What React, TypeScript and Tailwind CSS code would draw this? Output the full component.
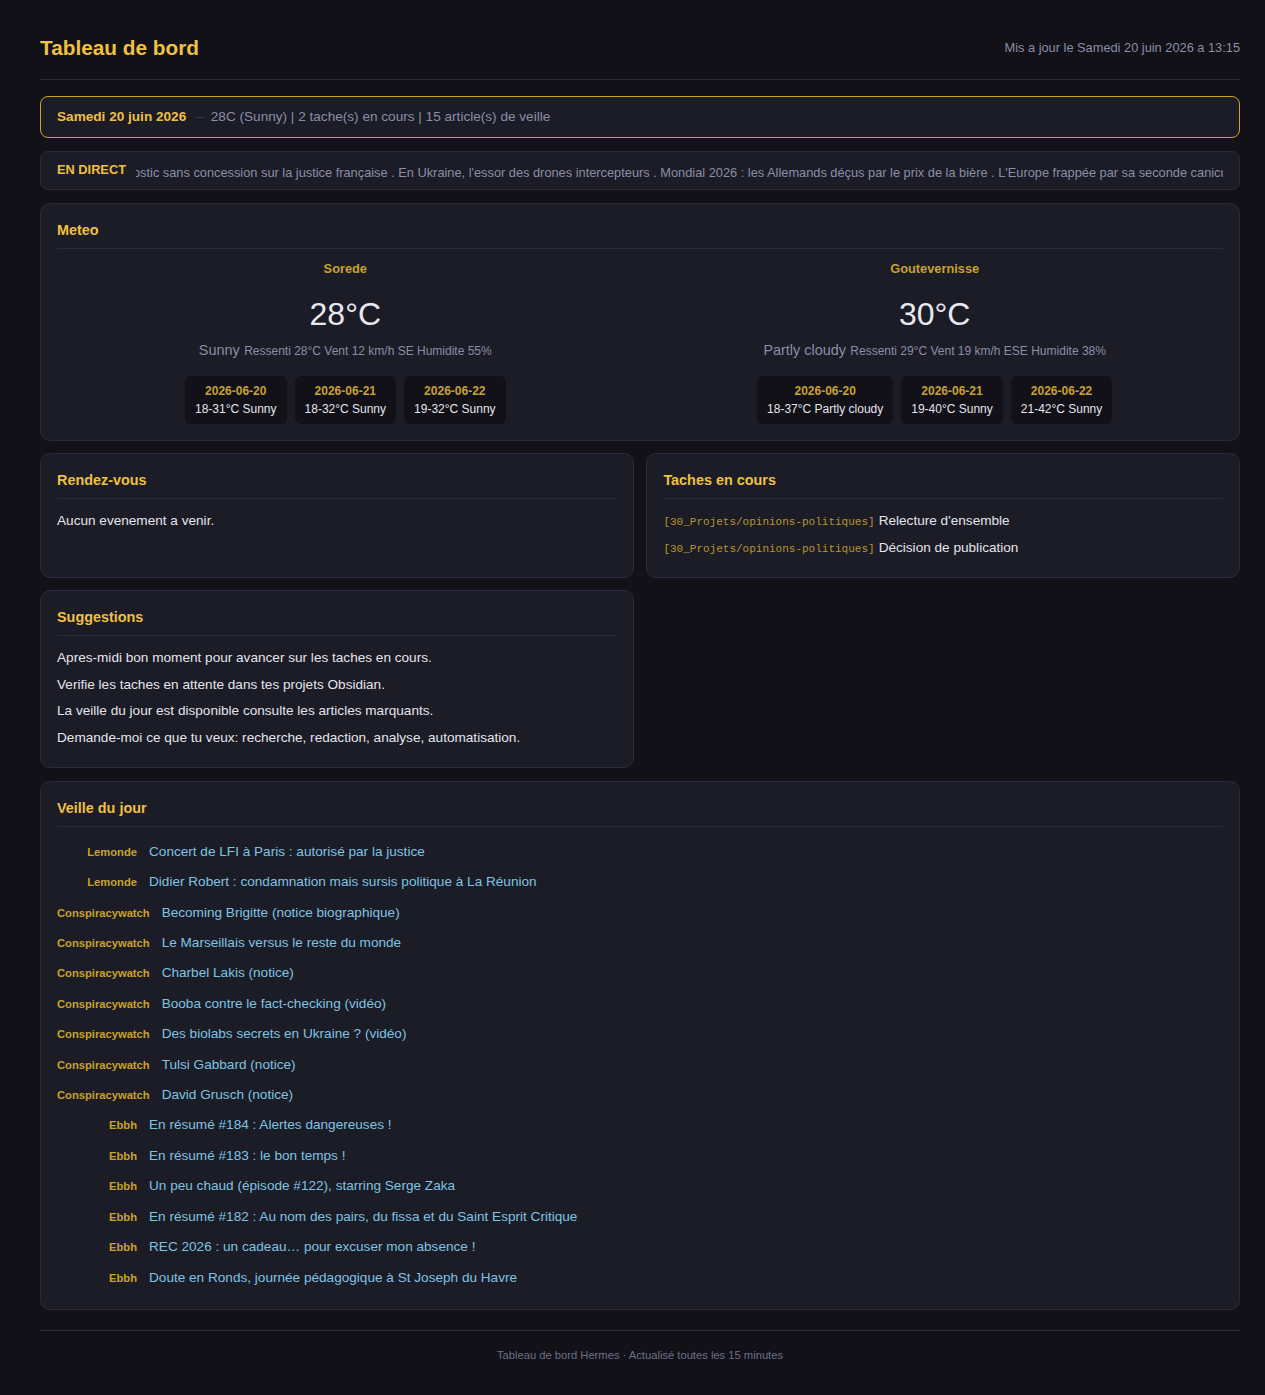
import type { ReactNode } from 'react';

type Forecast = { date: string; range: string };

type City = {
  name: string;
  temp: string;
  condition: string;
  details: string;
  forecast: Forecast[];
};

const cities: City[] = [
  {
    name: 'Sorede',
    temp: '28°C',
    condition: 'Sunny',
    details: 'Ressenti 28°C Vent 12 km/h SE Humidite 55%',
    forecast: [
      { date: '2026-06-20', range: '18-31°C Sunny' },
      { date: '2026-06-21', range: '18-32°C Sunny' },
      { date: '2026-06-22', range: '19-32°C Sunny' }
    ]
  },
  {
    name: 'Goutevernisse',
    temp: '30°C',
    condition: 'Partly cloudy',
    details: 'Ressenti 29°C Vent 19 km/h ESE Humidite 38%',
    forecast: [
      { date: '2026-06-20', range: '18-37°C Partly cloudy' },
      { date: '2026-06-21', range: '19-40°C Sunny' },
      { date: '2026-06-22', range: '21-42°C Sunny' }
    ]
  }
];

const tasks = [
  { project: '[30_Projets/opinions-politiques]', title: "Relecture d'ensemble" },
  { project: '[30_Projets/opinions-politiques]', title: 'Décision de publication' }
];

const suggestions = [
  'Apres-midi bon moment pour avancer sur les taches en cours.',
  'Verifie les taches en attente dans tes projets Obsidian.',
  'La veille du jour est disponible consulte les articles marquants.',
  'Demande-moi ce que tu veux: recherche, redaction, analyse, automatisation.'
];

const articles = [
  { source: 'Lemonde', title: 'Concert de LFI à Paris : autorisé par la justice' },
  { source: 'Lemonde', title: 'Didier Robert : condamnation mais sursis politique à La Réunion' },
  { source: 'Conspiracywatch', title: 'Becoming Brigitte (notice biographique)' },
  { source: 'Conspiracywatch', title: 'Le Marseillais versus le reste du monde' },
  { source: 'Conspiracywatch', title: 'Charbel Lakis (notice)' },
  { source: 'Conspiracywatch', title: 'Booba contre le fact-checking (vidéo)' },
  { source: 'Conspiracywatch', title: 'Des biolabs secrets en Ukraine ? (vidéo)' },
  { source: 'Conspiracywatch', title: 'Tulsi Gabbard (notice)' },
  { source: 'Conspiracywatch', title: 'David Grusch (notice)' },
  { source: 'Ebbh', title: 'En résumé #184 : Alertes dangereuses !' },
  { source: 'Ebbh', title: 'En résumé #183 : le bon temps !' },
  { source: 'Ebbh', title: 'Un peu chaud (épisode #122), starring Serge Zaka' },
  { source: 'Ebbh', title: 'En résumé #182 : Au nom des pairs, du fissa et du Saint Esprit Critique' },
  { source: 'Ebbh', title: 'REC 2026 : un cadeau… pour excuser mon absence !' },
  { source: 'Ebbh', title: 'Doute en Ronds, journée pédagogique à St Joseph du Havre' }
];

const ticker =
  "ostic sans concession sur la justice française . En Ukraine, l'essor des drones intercepteurs . Mondial 2026 : les Allemands déçus par le prix de la bière . L'Europe frappée par sa seconde canicule";

function Card({ title, children, className }: { title: string; children: ReactNode; className?: string }) {
  return (
    <section className={`rounded-[10px] border border-[#2a2b3a] bg-[#1b1c26] p-4 ${className ?? ''}`}>
      <h2 className="border-b border-[#2a2b3a] pb-2 text-[0.9rem] font-bold leading-[20px] text-[#f0c040]">{title}</h2>
      {children}
    </section>
  );
}

function CityWeather({ city }: { city: City }) {
  return (
    <div className="flex flex-col items-center text-center">
      <div className="text-[0.8rem] font-bold leading-[18px] text-[#c9a227]">{city.name}</div>
      <div className="mt-[17px] text-[2rem] leading-[38px] text-[#e8e8f0]">{city.temp}</div>
      <div className="mt-[7px] leading-[20px] text-[#8b8ea6]">
        <span className="text-[0.9rem]">{city.condition}</span>{' '}
        <span className="text-[0.75rem]">{city.details}</span>
      </div>
      <div className="mt-[15px] flex gap-2">
        {city.forecast.map((f) => (
          <div key={f.date} className="rounded-md bg-[#111117] px-2.5 py-1.5 text-[0.75rem] leading-[18px]">
            <div className="font-bold text-[#c9a227]">{f.date}</div>
            <div className="text-[#e4e4ec]">{f.range}</div>
          </div>
        ))}
      </div>
    </div>
  );
}

export default function App() {
  return (
    <div className="min-h-screen bg-[#111117] pl-10 pr-[25px] pt-[34px] font-['Liberation_Sans',Arial,sans-serif] text-[#e4e4ec]">
      <header className="flex items-center justify-between border-b border-[#2a2b3a] pb-[17px]">
        <h1 className="text-[1.3rem] font-bold leading-[28px] text-[#f0c040]">Tableau de bord</h1>
        <div className="text-[0.8rem] text-[#8b8ea6]">Mis a jour le Samedi 20 juin 2026 a 13:15</div>
      </header>

      <main className="mt-4 flex flex-col gap-[0.8rem]">
        <div className="flex items-center rounded-lg border border-[#c9a227] bg-[#1b1c26] px-4 py-[10px] text-[0.85rem] leading-[20px]">
          <span className="font-bold text-[#f0c040]">Samedi 20 juin 2026</span>
          <span className="ml-[10px] mr-[7px] text-[#3e4052]">–</span>
          <span className="text-[#8b8ea6]">28C (Sunny) | 2 tache(s) en cours | 15 article(s) de veille</span>
        </div>

        <div className="flex h-[39px] items-center rounded-lg border border-[#2a2b3a] bg-[#1b1c26] px-4">
          <span className="mr-2.5 shrink-0 text-[0.8rem] font-bold leading-[16px] text-[#f0c040]">EN DIRECT</span>
          <div className="mt-[5px] min-w-0 flex-1 overflow-hidden">
            <div className="-ml-[3px] whitespace-nowrap text-[0.8rem] leading-[18px] text-[#8b8ea6]">{ticker}</div>
          </div>
        </div>

        <Card title="Meteo">
          <div className="mt-[11px] grid grid-cols-2 gap-[0.8rem]">
            {cities.map((c) => (
              <CityWeather key={c.name} city={c} />
            ))}
          </div>
        </Card>

        <div className="grid grid-cols-2 gap-x-[0.8rem] gap-y-3">
          <Card title="Rendez-vous">
            <p className="mt-3 text-[0.85rem] leading-[20px]">Aucun evenement a venir.</p>
          </Card>
          <Card title="Taches en cours">
            <ul className="mt-[8px]">
              {tasks.map((t) => (
                <li key={t.title} className="flex items-baseline gap-[4px] py-1 text-[0.85rem] leading-[19px]">
                  <span className="font-['Liberation_Mono',monospace] text-[11px] leading-none text-[#b8952a]">
                    {t.project}
                  </span>
                  <span>{t.title}</span>
                </li>
              ))}
            </ul>
          </Card>
          <Card title="Suggestions">
            <ul className="mt-[9px]">
              {suggestions.map((s) => (
                <li key={s} className="py-[3px] text-[0.85rem] leading-[20.4px]">
                  {s}
                </li>
              ))}
            </ul>
          </Card>
        </div>

        <Card title="Veille du jour">
          <ul className="mt-[10px]">
            {articles.map((a) => (
              <li key={a.title} className="flex items-center gap-3 py-[6px] leading-[18.4px]">
                <span className="min-w-[80px] text-right text-[0.7rem] font-bold text-[#c9a227]">{a.source}</span>
                <span className="text-[0.85rem] text-[#7cc4e4]">{a.title}</span>
              </li>
            ))}
          </ul>
        </Card>
      </main>

      <footer className="mt-5 border-t border-[#2a2b3a] pb-8 pt-4 text-center text-[0.7rem] leading-[16px] text-[#6e7088]">
        Tableau de bord Hermes · Actualisé toutes les 15 minutes
      </footer>
    </div>
  );
}
